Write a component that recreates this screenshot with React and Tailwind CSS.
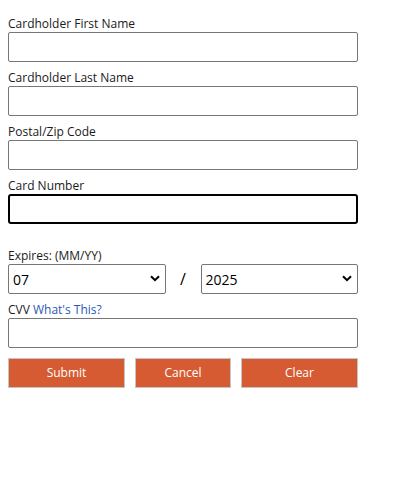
import React from 'react';

const Field = ({ label, focused = false, className = '' }) => (
  <div className={className}>
    <label className="block text-[12px] leading-4 text-[#1a1a1a]">{label}</label>
    <input
      type="text"
      className={`block w-full h-[30px] bg-white outline-none ${
        focused
          ? 'border-2 border-black rounded-[3px]'
          : 'border border-[#767676] rounded-[2px]'
      }`}
    />
  </div>
);

const Select = ({ value, options }) => (
  <div className="relative flex-1">
    <select
      defaultValue={value}
      className="appearance-none block w-full h-[30px] pl-[4px] pr-6 text-[14px] text-black bg-white border border-[#767676] rounded-[2px] outline-none"
    >
      {options.map(o => (
        <option key={o} value={o}>{o}</option>
      ))}
    </select>
    <svg
      className="absolute right-[6px] top-[11px] pointer-events-none"
      width="10"
      height="7"
      viewBox="0 0 10 7"
    >
      <path d="M1 1.2 L5 5.2 L9 1.2" fill="none" stroke="#000" strokeWidth="2" />
    </svg>
  </div>
);

const months = ['01', '02', '03', '04', '05', '06', '07', '08', '09', '10', '11', '12'];
const years = ['2025', '2026', '2027', '2028', '2029', '2030'];

export default function App() {
  return (
    <div className="w-[399px] h-[493px] bg-white" style={{ fontFamily: '"Open Sans", "Noto Sans", sans-serif' }}>
      <form className="w-[350px] ml-[8px] pt-[16px] flex flex-col gap-[8px]">
        <Field label="Cardholder First Name" />
        <Field label="Cardholder Last Name" />
        <Field label="Postal/Zip Code" />
        <Field label="Card Number" focused />

        <div className="mt-[16px]">
          <label className="block text-[12px] leading-4 text-[#1a1a1a]">Expires: (MM/YY)</label>
          <div className="flex items-center">
            <Select value="07" options={months} />
            <span className="w-[35px] text-center text-[16px] text-black">/</span>
            <Select value="2025" options={years} />
          </div>
        </div>

        <div>
          <label className="block text-[12px] leading-4 text-[#1a1a1a]">
            CVV <a href="#" className="text-[#2b5ab5]">What's This?</a>
          </label>
          <input
            type="text"
            className="block w-full h-[30px] bg-white border border-[#767676] rounded-[2px] outline-none"
          />
        </div>

        <div className="flex gap-[10px] mt-[2px]">
          <button type="button" className="w-[117px] h-[30px] bg-[#d65b32] border border-[#c4c4c4] text-white text-[12px]">
            Submit
          </button>
          <button type="button" className="w-[96px] h-[30px] bg-[#d65b32] border border-[#c4c4c4] text-white text-[12px]">
            Cancel
          </button>
          <button type="button" className="w-[117px] h-[30px] bg-[#d65b32] border border-[#c4c4c4] text-white text-[12px]">
            Clear
          </button>
        </div>
      </form>
    </div>
  );
}
